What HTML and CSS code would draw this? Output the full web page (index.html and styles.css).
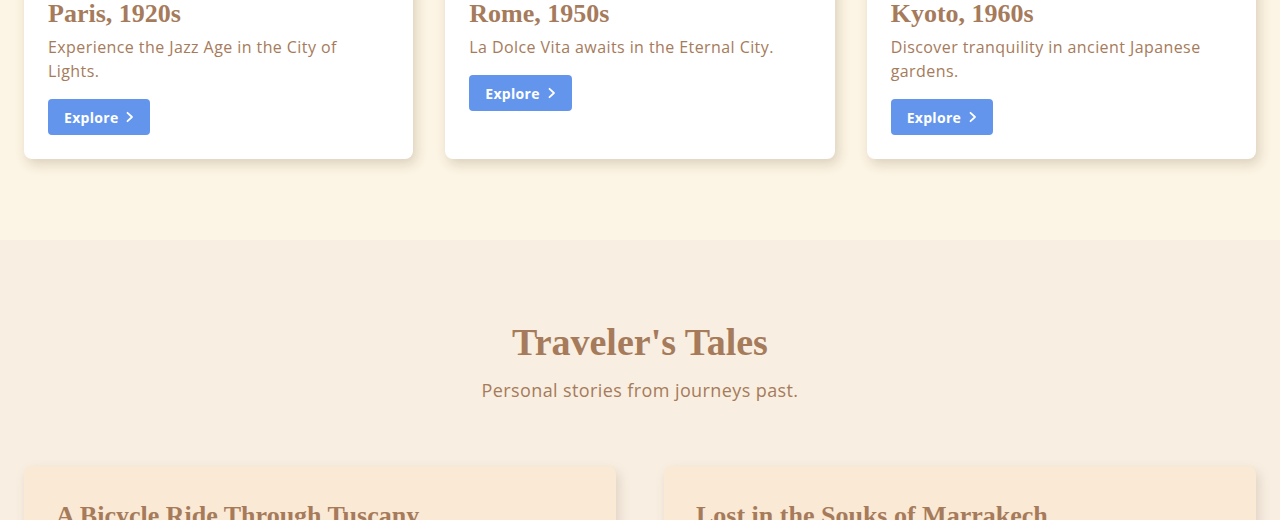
FILE: index.html
```html
<!DOCTYPE html>
<html lang="en">
<head>
<meta charset="utf-8">
<title>Time Travel Destinations</title>
<link rel="stylesheet" href="styles.css">
</head>
<body>
<section class="destinations">
  <div class="container grid-3">
    <article class="dest-card">
      <div class="dest-media"></div>
      <div class="dest-body">
        <h3 class="dest-title">Paris, 1920s</h3>
        <p class="dest-text">Experience the Jazz Age in the City of Lights.</p>
        <a class="btn" href="#">Explore <svg class="chev" viewBox="0 0 8 16" width="8" height="16"><path d="M1.5 3.8L6 8l-4.5 4.2" fill="none" stroke="currentColor" stroke-width="1.8" stroke-linecap="round" stroke-linejoin="round"/></svg></a>
      </div>
    </article>
    <article class="dest-card">
      <div class="dest-media"></div>
      <div class="dest-body">
        <h3 class="dest-title">Rome, 1950s</h3>
        <p class="dest-text">La Dolce Vita awaits in the Eternal City.</p>
        <a class="btn" href="#">Explore <svg class="chev" viewBox="0 0 8 16" width="8" height="16"><path d="M1.5 3.8L6 8l-4.5 4.2" fill="none" stroke="currentColor" stroke-width="1.8" stroke-linecap="round" stroke-linejoin="round"/></svg></a>
      </div>
    </article>
    <article class="dest-card">
      <div class="dest-media"></div>
      <div class="dest-body">
        <h3 class="dest-title">Kyoto, 1960s</h3>
        <p class="dest-text">Discover tranquility in ancient Japanese gardens.</p>
        <a class="btn" href="#">Explore <svg class="chev" viewBox="0 0 8 16" width="8" height="16"><path d="M1.5 3.8L6 8l-4.5 4.2" fill="none" stroke="currentColor" stroke-width="1.8" stroke-linecap="round" stroke-linejoin="round"/></svg></a>
      </div>
    </article>
  </div>
</section>
<section class="tales">
  <div class="container">
    <h2 class="section-title">Traveler's Tales</h2>
    <p class="section-sub">Personal stories from journeys past.</p>
    <div class="grid-2">
      <article class="tale-card">
        <h3 class="tale-title">A Bicycle Ride Through Tuscany</h3>
        <p class="tale-text">Rolling hills, cypress trees and long lunches under the vines.</p>
      </article>
      <article class="tale-card">
        <h3 class="tale-title">Lost in the Souks of Marrakech</h3>
        <p class="tale-text">Spices, lanterns and a maze of alleys full of surprises.</p>
      </article>
    </div>
  </div>
</section>
</body>
</html>
```
FILE: styles.css
```css
* { box-sizing: border-box; }
html, body { margin: 0; padding: 0; }
body {
  font-family: "Open Sans", "Liberation Sans", sans-serif;
  color: #a67b5b;
  background: #f8efe2;
}
.container {
  max-width: 1280px;
  margin: 0 auto;
  padding: 0 24px;
}
.destinations {
  background: #fcf4e4;
  padding-bottom: 81px;
  margin-top: -204px;
}
.grid-3 {
  display: grid;
  grid-template-columns: repeat(3, 1fr);
  gap: 32px;
}
.dest-card {
  background: #fff;
  border-radius: 8px;
  box-shadow: 3px 5px 12px rgba(110, 80, 50, 0.22);
  display: flex;
  flex-direction: column;
  overflow: hidden;
}
.dest-media {
  height: 192px;
  background: #e8d7bf;
}
.dest-body {
  padding: 12px 24px 24px;
  display: flex;
  flex-direction: column;
  align-items: flex-start;
  flex: 1;
}
.dest-title {
  font-family: "Liberation Serif", "DejaVu Serif", serif;
  font-weight: 700;
  font-size: 26px;
  line-height: 28px;
  margin: 0 0 7px;
}
.dest-text {
  font-size: 16px;
  line-height: 24px;
  letter-spacing: 0.42px;
  margin: 0 0 16px;
}
.btn {
  display: inline-flex;
  align-items: center;
  gap: 8px;
  height: 36px;
  padding: 0 16px;
  background: #6495ed;
  color: #fff;
  border-radius: 4px;
  font-size: 14px;
  font-weight: 700;
  letter-spacing: 0.3px;
  text-decoration: none;
}
.chev { display: block; }
.tales {
  padding: 80px 0 64px;
}
.section-title {
  font-family: "Liberation Serif", "DejaVu Serif", serif;
  font-weight: 700;
  font-size: 38px;
  line-height: 44px;
  text-align: center;
  margin: 0 0 12px;
}
.section-sub {
  text-align: center;
  font-size: 18px;
  line-height: 28px;
  letter-spacing: 0.4px;
  margin: 0 0 62px;
}
.grid-2 {
  display: grid;
  grid-template-columns: 1fr 1fr;
  gap: 48px;
}
.tale-card {
  background: #fae9d5;
  border-radius: 8px;
  padding: 32px;
  box-shadow: 3px 5px 12px rgba(110, 80, 50, 0.18);
}
.tale-title {
  font-family: "Liberation Serif", "DejaVu Serif", serif;
  font-weight: 700;
  font-size: 26px;
  line-height: 36px;
  margin: 0 0 12px;
}
.tale-text {
  font-size: 16px;
  line-height: 26px;
  margin: 0;
}
```
